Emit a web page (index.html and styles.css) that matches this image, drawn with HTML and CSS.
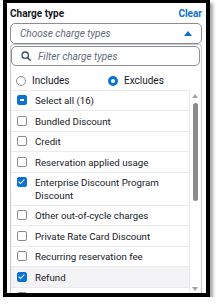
FILE: index.html
```html
<!DOCTYPE html>
<html lang="en">
<head>
    <meta charset="UTF-8">
    <title>Charge type filter</title>
    <link rel="stylesheet" href="styles.css">
</head>
<body>
    <div class="frame">
        <div class="header">
            <span class="label">Charge type</span>
            <span class="clear">Clear</span>
        </div>

        <div class="select">
            <span class="placeholder">Choose charge types</span>
            <span class="caret"></span>
        </div>

        <div class="dropdown">
            <div class="filter">
                <svg class="search" width="10" height="10" viewBox="0 0 10 10">
                    <circle cx="4.2" cy="4.2" r="3.2" fill="none" stroke="#414d5c" stroke-width="1.3"/>
                    <line x1="6.6" y1="6.6" x2="9.2" y2="9.2" stroke="#414d5c" stroke-width="1.4" stroke-linecap="round"/>
                </svg>
                <span class="placeholder">Filter charge types</span>
            </div>

            <div class="radios">
                <label class="radio"><span class="circle"></span>Includes</label>
                <label class="radio on"><span class="circle"></span>Excludes</label>
            </div>

            <div class="list-wrap">
                <div class="list">
                    <div class="row"><span class="box mixed"></span><span>Select all (16)</span></div>
                    <div class="row"><span class="box"></span><span>Bundled Discount</span></div>
                    <div class="row"><span class="box"></span><span>Credit</span></div>
                    <div class="row"><span class="box"></span><span>Reservation applied usage</span></div>
                    <div class="row"><span class="box checked"></span><span>Enterprise Discount Program Discount</span></div>
                    <div class="row"><span class="box"></span><span>Other out-of-cycle charges</span></div>
                    <div class="row"><span class="box"></span><span>Private Rate Card Discount</span></div>
                    <div class="row"><span class="box"></span><span>Recurring reservation fee</span></div>
                    <div class="row hover"><span class="box checked"></span><span>Refund</span></div>
                    <div class="row"><span class="box"></span></div>
                </div>
                <div class="scrollbar">
                    <span class="arrow up"></span>
                    <span class="thumb"></span>
                    <span class="arrow down"></span>
                </div>
            </div>
        </div>
    </div>
</body>
</html>
```

FILE: styles.css
```css
* {
    margin: 0;
    padding: 0;
    box-sizing: border-box;
}

body {
    font-family: Roboto, 'Open Sans', sans-serif;
    background: #fff;
    color: #16191f;
}

.frame {
    width: 207px;
    height: 297px;
    margin-left: 3px;
    border: 4px solid #000;
    border-top-width: 3px;
    box-shadow: 3px 3px 3px rgba(0,0,0,0.35);
    padding: 2px 4px 0 3px;
    overflow: hidden;
    background: #fff;
}

.header {
    display: flex;
    justify-content: space-between;
    align-items: center;
    height: 17px;
    font-size: 10px;
    font-weight: bold;
}

.clear {
    color: #0972d3;
}

.select {
    display: flex;
    justify-content: space-between;
    align-items: center;
    height: 21px;
    margin-top: 1px;
    padding: 0 9px;
    border: 1px solid #8c8c94;
    border-radius: 5px;
}

.placeholder {
    font-size: 10px;
    font-style: italic;
    color: #5f6b7a;
}

.caret {
    width: 0;
    height: 0;
    border-left: 4px solid transparent;
    border-right: 4px solid transparent;
    border-bottom: 5px solid #0972d3;
}

.dropdown {
    border: 1px solid #c6c6cd;
    border-bottom: none;
    border-radius: 4px 4px 0 0;
    padding: 1px 1px 0 0;
    height: 260px;
}

.filter {
    display: flex;
    align-items: center;
    gap: 7px;
    height: 20px;
    padding: 0 9px;
    border: 1px solid #8c8c94;
    border-radius: 5px;
}

.radios {
    display: flex;
    padding: 5px 0 0 5px;
    height: 24px;
    font-size: 10px;
}

.radio {
    display: flex;
    align-items: center;
    gap: 6px;
    width: 96px;
}

.circle {
    width: 10px;
    height: 10px;
    border-radius: 50%;
    border: 1px solid #8c8c94;
}

.radio.on .circle {
    border: 3px solid #0972d3;
}

.list-wrap {
    display: flex;
    height: 220px;
}

.list {
    width: 181px;
    border-top: 1px solid #e9ebed;
    border-right: 1px solid #e9ebed;
    font-size: 9.7px;
    line-height: 13px;
}

.row {
    display: flex;
    align-items: flex-start;
    gap: 8px;
    min-height: 20px;
    padding: 3.4px 6px 3px;
    border-bottom: 1px solid #e9ebed;
}

.row.hover {
    background: #f3f3f5;
}

.box {
    flex: none;
    width: 10px;
    height: 10px;
    margin-top: 1px;
    border: 1px solid #8c8c94;
    border-radius: 2px;
    position: relative;
}

.box.checked,
.box.mixed {
    background: #0972d3;
    border-color: #0972d3;
}

.box.mixed::after {
    content: "";
    position: absolute;
    left: 2px;
    top: 3px;
    width: 4px;
    height: 2px;
    background: #fff;
}

.box.checked::after {
    content: "";
    position: absolute;
    left: 2px;
    top: 0;
    width: 2px;
    height: 5px;
    border-right: 1.5px solid #fff;
    border-bottom: 1.5px solid #fff;
    transform: rotate(45deg);
}

.scrollbar {
    width: 10px;
    display: flex;
    flex-direction: column;
    align-items: center;
    padding-top: 4px;
    position: relative;
}

.arrow {
    width: 0;
    height: 0;
    border-left: 3px solid transparent;
    border-right: 3px solid transparent;
}

.arrow.up {
    border-bottom: 4px solid #a3a3a3;
}

.arrow.down {
    border-top: 4px solid #a3a3a3;
    position: absolute;
    top: 197px;
}

.thumb {
    width: 5px;
    height: 98px;
    margin-top: 5px;
    border-radius: 3px;
    background: #8b8b8b;
}
```
